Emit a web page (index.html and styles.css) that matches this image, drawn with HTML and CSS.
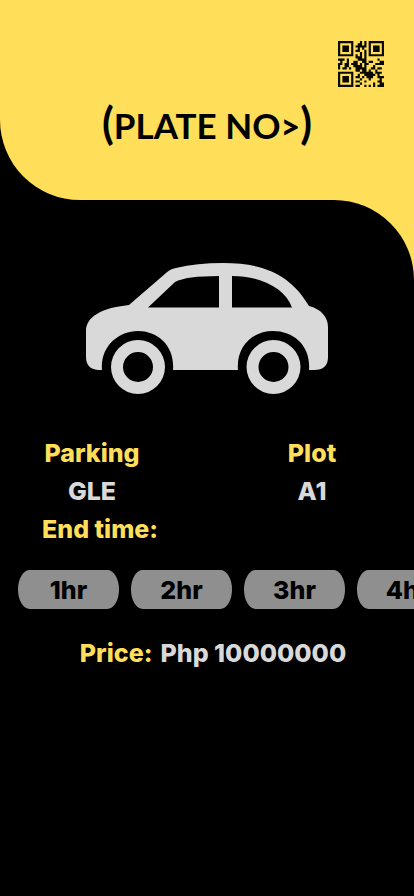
FILE: index.html
```
<!DOCTYPE html>
<html lang="en">
<head>
<meta charset="utf-8">
<meta name="viewport" content="width=device-width, initial-scale=1">
<title>Parking ticket</title>
<link rel="stylesheet" href="styles.css">
</head>
<body>
<header class="top">
  <div class="banner">
  <svg class="qr" viewBox="0 0 21 21" role="img" aria-label="QR code" stroke="#0a0900" fill="none">
    <path d="M.5.5h6v6h-6zM14.500.5h6v6h-6zM.5 14.500h6v6h-6z"/>
    <path stroke="none" fill="#0a0900" d="M2 2h3v3H2zM16 2h3v3h-3zM2 16h3v3H2z"/>
    <path d="M10 .5h1M12 .5h1M9 1.500h2M12 1.500h1M8 2.500h5M9 3.500h1M11 3.500h1M8 4.500h2M12 4.500h1M10 5.500h1M12 5.500h1M8 6.500h1M10 6.500h1M12 6.500h1M8 7.500h3M12 7.500h1M0 8.500h3M4 8.500h1M9 8.500h4M18 8.500h1M1 9.500h1M4 9.500h1M7 9.500h2M11 9.500h2M14 9.500h2M19 9.500h2M0 10.500h2M3 10.500h2M6 10.500h3M10 10.500h1M12 10.500h2M17 10.500h4M0 11.500h1M3 11.500h2M7 11.500h4M12 11.500h1M16 11.500h1M0 12.500h1M2 12.500h2M5 12.500h1M8 12.500h5M15 12.500h2M18 12.500h2M8 13.500h2M11 13.500h2M14 13.500h1M17 13.500h1M10 14.500h6M17 14.500h3M9 15.500h1M12 15.500h5M18 15.500h1M8 16.500h2M11 16.500h1M13 16.500h3M18 16.500h3M10 17.500h1M14 17.500h1M19 17.500h1M8 18.500h2M12 18.500h1M18 18.500h2M10 19.500h1M16 19.500h1M19 19.500h2M8 20.500h2M12 20.500h1M14 20.500h1M16 20.500h1M18 20.500h3"/>
  </svg>
  <h1 class="plate"><span class="paren">(</span>PLATE NO<span class="arrow">&gt;</span><span class="paren">)</span></h1>
  </div>
</header>
<div class="backdrop">
<main class="panel">
  <svg class="car" viewBox="85 263 242 131" role="img" aria-label="Car" fill="#d9d9d9">
    <path fill-rule="evenodd" d="M85 331C85 317 100 308 128 305L165 273Q169 269 175 268Q196 263 222 263C263 263 290 275 308 306C320 309 327 317 327 327V357Q327 370 313 370H308C310 346 293 331 272 331S235 347 237 370H172C174 346 157 331 137 331S99 347 101 370H97Q85 369 85 357ZM147 307.500H218V276Q185 276 174 282ZM231 276V307.500H291C284 288 259 276 231 276Z"/>
    <path fill-rule="evenodd" d="M110 367a27 27 0 1 0 54 0a27 27 0 1 0-54 0M122 367a15 15 0 1 1 30 0a15 15 0 1 1-30 0M245.500 367a27 27 0 1 0 54 0a27 27 0 1 0-54 0M257.500 367a15 15 0 1 1 30 0a15 15 0 1 1-30 0"/>
  </svg>
  <dl class="details">
    <div class="detail"><dt>Parking</dt><dd>GLE</dd></div>
    <div class="detail"><dt>Plot</dt><dd>A1</dd></div>
  </dl>
  <h2 class="end">End time:</h2>
  <div class="hours">
    <button class="hour" type="button">1hr</button>
    <button class="hour" type="button">2hr</button>
    <button class="hour" type="button">3hr</button>
    <button class="hour" type="button">4hr</button>
  </div>
  <p class="price"><span class="label">Price:</span><span>Php 10000000</span></p>
</main>
</div>
</body>
</html>
```
FILE: styles.css
```
* { box-sizing: border-box; }
body {
  margin: 0;
  background: #000;
  color: #d9d9d9;
  font: 800 25px/38px Inter, sans-serif;
}
.top { background: #000; }
.banner {
  display: flex;
  flex-direction: column;
  min-height: 200px;
  padding: 41px 30px 0;
  background: #ffde59;
  border-bottom-left-radius: 80px;
}
.qr { width: 46px; height: 46px; align-self: flex-end; }
.plate {
  display: flex;
  justify-content: center;
  align-items: baseline;
  margin: 14px 0 0;
  color: #000;
  white-space: pre;
  font: 700 35px/44px Lato, sans-serif;
}
.paren { font-size: 43px; }
.arrow { font-size: 34px; font-weight: 900; }
.backdrop { background: linear-gradient(#ffde59 0 100px, #000 100px); }
.panel {
  display: flex;
  flex-direction: column;
  min-height: calc(100vh - 200px);
  padding-top: 63px;
  background: #000;
  border-top-right-radius: 80px;
}
.car { width: 60%; max-width: 242px; align-self: center; }
.details {
  display: grid;
  grid-template-columns: 1fr 1fr;
  column-gap: 36px;
  margin: 40px 0 0;
  padding-right: 10px;
}
.detail { text-align: center; }
dt, .end, .label { color: #ffde59; }
dd { margin: 0; }
.end { margin: 0 42px; font: inherit; }
.hours {
  display: flex;
  gap: 12px;
  margin-top: 22px;
  padding-left: 18px;
  overflow: hidden;
}
.hour {
  flex: 0 0 101px;
  height: 39px;
  padding: 0;
  border: 0;
  border-radius: 12px / 20px;
  background: #8f8f8f;
  color: #000;
  font: inherit;
}
.price {
  display: flex;
  justify-content: center;
  gap: 8px;
  margin: 25px 0;
  padding-left: 12px;
}
```
